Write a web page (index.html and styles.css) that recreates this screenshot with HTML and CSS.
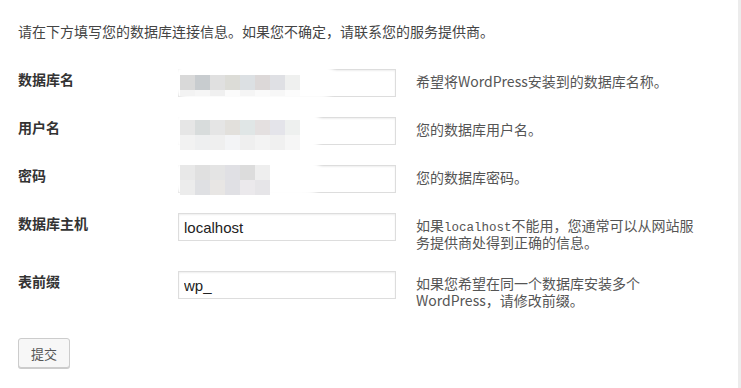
FILE: index.html
```html
<!DOCTYPE html>
<html lang="zh-CN">
<head>
<meta charset="utf-8">
<title>数据库连接信息</title>
<link rel="stylesheet" href="styles.css">
</head>
<body>
<div class="page">
  <form class="setup">
    <p class="intro">请在下方填写您的数据库连接信息。如果您不确定，请联系您的服务提供商。</p>
    <div class="form-table">
      <div class="row">
        <label class="label">数据库名</label>
        <div class="field">
          <input class="input" type="text" value="">
          <div class="mask mask-1"></div>
          <div class="pix pix-8">
            <i style="background:#d9d9d9"></i><i style="background:#c8cccf"></i><i style="background:#e0e0e0"></i><i style="background:#dcdcd7"></i><i style="background:#dce0e3"></i><i style="background:#dcd8d8"></i><i style="background:#dfe0e4"></i><i style="background:#eff0ef"></i>
            <b style="background:#f3f3f3"></b><b style="background:#f6f6f6"></b><b style="background:#f0f0f0"></b><b style="background:#fbfbfb"></b><b style="background:#f5f5f5"></b><b style="background:#fafafa"></b><b style="background:#f7f7f7"></b><b style="background:#fcfcfc"></b>
          </div>
        </div>
        <div class="desc">希望将WordPress安装到的数据库名称。</div>
      </div>
      <div class="row">
        <label class="label">用户名</label>
        <div class="field">
          <input class="input" type="text" value="">
          <div class="mask mask-2"></div>
          <div class="pix pix-8 two">
            <i style="background:#e6e6e6"></i><i style="background:#d8dcdc"></i><i style="background:#e5e5e5"></i><i style="background:#e2e0dc"></i><i style="background:#e0e6e6"></i><i style="background:#e4e0e0"></i><i style="background:#e4e4ea"></i><i style="background:#eef0ef"></i>
            <i style="background:#f2f2f2"></i><i style="background:#eeeff0"></i><i style="background:#efefef"></i><i style="background:#f3f4f6"></i><i style="background:#efefef"></i><i style="background:#f3f3f3"></i><i style="background:#f0f0f0"></i><i style="background:#f6f6f6"></i>
          </div>
        </div>
        <div class="desc">您的数据库用户名。</div>
      </div>
      <div class="row">
        <label class="label">密码</label>
        <div class="field">
          <input class="input" type="text" value="">
          <div class="mask mask-3"></div>
          <div class="pix pix-6 two">
            <i style="background:#e8e8e8"></i><i style="background:#e0e0e0"></i><i style="background:#e4e4e4"></i><i style="background:#e0e0e4"></i><i style="background:#dcdcdc"></i><i style="background:#eeeeee"></i>
            <i style="background:#ececec"></i><i style="background:#dfe0e3"></i><i style="background:#e8e6e4"></i><i style="background:#e0e0e4"></i><i style="background:#ebe9ec"></i><i style="background:#e6e5e8"></i>
          </div>
        </div>
        <div class="desc">您的数据库密码。</div>
      </div>
      <div class="row">
        <label class="label">数据库主机</label>
        <div class="field">
          <input class="input" type="text" value="localhost">
        </div>
        <div class="desc">如果<code>localhost</code>不能用，您通常可以从网站服务提供商处得到正确的信息。</div>
      </div>
      <div class="row">
        <label class="label">表前缀</label>
        <div class="field">
          <input class="input" type="text" value="wp_">
        </div>
        <div class="desc">如果您希望在同一个数据库安装多个WordPress，请修改前缀。</div>
      </div>
    </div>
    <div class="actions">
      <button class="button" type="button">提交</button>
    </div>
  </form>
</div>
</body>
</html>
```

FILE: styles.css
```css
html, body {
  margin: 0;
  padding: 0;
  background: #fff;
}

body {
  font-family: "Noto Sans CJK SC", "Noto Sans", sans-serif;
  font-size: 14px;
  color: #444;
}

.page {
  min-height: 388px;
  box-sizing: border-box;
  width: 741px;
  border-right: 3px solid #ececec;
  padding: 22px 0 0 18px;
}

.intro {
  margin: 0 0 18px;
  line-height: 19px;
  color: #444;
}

.form-table {
  display: flex;
  flex-direction: column;
}

.row {
  display: grid;
  grid-template-columns: 160px 218px 312px;
  padding: 10px 0;
  align-items: start;
}

.label {
  font-weight: bold;
  color: #333;
  line-height: 19px;
  margin-top: 1px;
}

.field {
  position: relative;
  height: 28px;
}

.input {
  box-sizing: border-box;
  width: 218px;
  height: 28px;
  margin: 0;
  border: 1px solid #ddd;
  box-shadow: inset 0 1px 2px rgba(0, 0, 0, 0.07);
  background: #fff;
  padding: 0 5px;
  font-family: "Liberation Sans", Arial, sans-serif;
  font-size: 15px;
  color: #222;
  outline: none;
}

.mask {
  position: absolute;
  background: #fff;
  filter: blur(2px);
  border-radius: 20px;
}

.mask-1 { left: -6px; top: -6px; width: 165px; height: 36px; }
.mask-2 { left: -6px; top: -9px; width: 150px; height: 45px; }
.mask-3 { left: -6px; top: -7px; width: 151px; height: 38px; }

.pix {
  position: absolute;
  left: 2px;
  display: grid;
  grid-auto-rows: 15px;
}

.pix i, .pix b {
  display: block;
}

.pix-8 { grid-template-columns: repeat(8, 15px); top: 6px; }
.pix-8 b { height: 6px; }
.pix-8.two { top: 3px; }
.pix-6 { grid-template-columns: repeat(6, 15px); top: 0; }

.desc {
  margin: 4px 0 0 20px;
  width: 290px;
  line-height: 17px;
  color: #555;
}

.desc code {
  font-family: "Liberation Mono", "DejaVu Sans Mono", monospace;
  font-size: 12.5px;
  line-height: 0;
  background: none;
}

.actions {
  margin-top: 19px;
}

.button {
  box-sizing: border-box;
  width: 52px;
  height: 30px;
  padding: 0;
  border: 1px solid #ccc;
  border-radius: 3px;
  background: #f7f7f7;
  box-shadow: 0 1px 0 #ccc;
  font-family: "Noto Sans CJK SC", sans-serif;
  font-size: 13px;
  color: #555;
  cursor: pointer;
}
```
